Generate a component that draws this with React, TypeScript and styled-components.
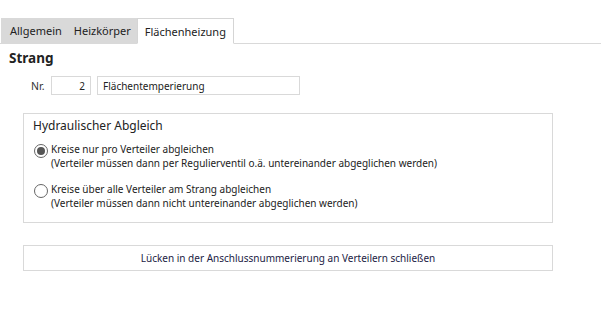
import React from "react";
import styled, { createGlobalStyle } from "styled-components";

const Global = createGlobalStyle`
  html, body { margin: 0; padding: 0; background: #fff; }
  body { font-family: "Noto Sans", "DejaVu Sans", sans-serif; color: #1a1a1a; }
`;

const Page = styled.div`
  width: 601px;
  height: 328px;
  padding-top: 18px;
  box-sizing: border-box;
`;

const TabBar = styled.div`
  display: flex;
  align-items: flex-end;
  height: 26px;
  border-bottom: 1px solid #d9d9d9;
  box-sizing: border-box;
`;

const Tab = styled.div<{ $active?: boolean }>`
  height: ${(p) => (p.$active ? "26px" : "25px")};
  box-sizing: border-box;
  padding: 0 ${(p) => (p.$active ? "7px" : "6px")};
  display: flex;
  align-items: center;
  font-size: 11px;
  color: #222;
  background: ${(p) => (p.$active ? "#fff" : "#d9d9d9")};
  border: ${(p) => (p.$active ? "1px solid #d5d5d5" : "none")};
  border-bottom: ${(p) => (p.$active ? "1px solid #fff" : "none")};
  margin-bottom: ${(p) => (p.$active ? "-1px" : "0")};
  &:first-child { margin-left: 1px; padding-left: 9px; }
`;

const Title = styled.div`
  font-weight: 700;
  font-size: 13.5px;
  color: #222;
  margin: 5px 0 0 9px;
  line-height: 18px;
`;

const FieldRow = styled.div`
  display: flex;
  align-items: center;
  margin: 9px 0 0 31px;
  gap: 6px;
`;

const Label = styled.span`
  font-size: 10.5px;
  color: #333;
  width: 14px;
`;

const Input = styled.div<{ $w: number; $right?: boolean }>`
  width: ${(p) => p.$w}px;
  height: 19px;
  box-sizing: border-box;
  border: 1px solid #d9d9d9;
  font-size: 10px;
  color: #222;
  display: flex;
  align-items: center;
  justify-content: ${(p) => (p.$right ? "flex-end" : "flex-start")};
  padding: 0 5px;
`;

const Group = styled.div`
  margin: 18px 0 0 23px;
  width: 530px;
  height: 110px;
  box-sizing: border-box;
  border: 1px solid #d9d9d9;
  padding: 3px 0 0 9px;
`;

const GroupTitle = styled.div`
  font-size: 12px;
  color: #222;
  line-height: 18px;
  margin-bottom: 7px;
`;

const Option = styled.div`
  display: flex;
  align-items: flex-start;
  margin-bottom: 12px;
`;

const Radio = styled.div<{ $checked?: boolean }>`
  width: 12px;
  height: 12px;
  border: 1px solid #666;
  border-radius: 50%;
  margin: 2px 3px 0 1px;
  display: flex;
  align-items: center;
  justify-content: center;
  flex-shrink: 0;
  &::after {
    content: "";
    display: ${(p) => (p.$checked ? "block" : "none")};
    width: 8px;
    height: 8px;
    border-radius: 50%;
    background: #555;
  }
`;

const OptionText = styled.div`
  font-size: 10px;
  line-height: 14px;
  color: #222;
`;

const Button = styled.div`
  margin: 22px 0 0 23px;
  width: 530px;
  height: 26px;
  box-sizing: border-box;
  border: 1px solid #d9d9d9;
  display: flex;
  align-items: center;
  justify-content: center;
  font-size: 10px;
  color: #222244;
`;

export default function App() {
  return (
    <>
      <Global />
      <Page>
        <TabBar>
          <Tab>Allgemein</Tab>
          <Tab>Heizkörper</Tab>
          <Tab $active>Flächenheizung</Tab>
        </TabBar>
        <Title>Strang</Title>
        <FieldRow>
          <Label>Nr.</Label>
          <Input $w={40} $right>2</Input>
          <Input $w={203}>Flächentemperierung</Input>
        </FieldRow>
        <Group>
          <GroupTitle>Hydraulischer Abgleich</GroupTitle>
          <Option>
            <Radio $checked />
            <OptionText>
              Kreise nur pro Verteiler abgleichen
              <br />
              (Verteiler müssen dann per Regulierventil o.ä. untereinander abgeglichen werden)
            </OptionText>
          </Option>
          <Option>
            <Radio />
            <OptionText>
              Kreise über alle Verteiler am Strang abgleichen
              <br />
              (Verteiler müssen dann nicht untereinander abgeglichen werden)
            </OptionText>
          </Option>
        </Group>
        <Button>Lücken in der Anschlussnummerierung an Verteilern schließen</Button>
      </Page>
    </>
  );
}
